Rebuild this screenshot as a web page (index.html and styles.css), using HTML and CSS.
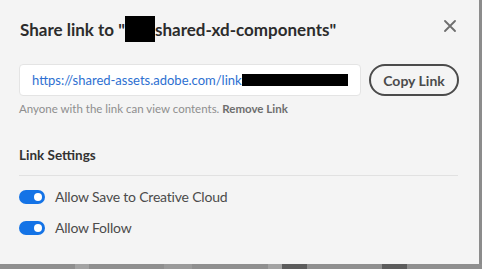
FILE: index.html
```html
<!DOCTYPE html>
<html lang="en">
<head>
    <meta charset="UTF-8">
    <title>Share link</title>
    <link rel="stylesheet" href="styles.css">
</head>
<body>

<div class="page">
  <div class="dialog">
    <div class="dialog-header">
      <h1 class="dialog-title">Share link to "<span class="redact redact-title"></span>shared-xd-components"</h1>
      <button class="close-btn" aria-label="Close">
        <svg width="12" height="12" viewBox="0 0 12 12">
          <path d="M1 1 L11 11 M11 1 L1 11" stroke="#6e6e6e" stroke-width="1.8" stroke-linecap="round"/>
        </svg>
      </button>
    </div>

    <div class="link-row">
      <div class="link-field">
        <span class="link-url">https://shared-assets.adobe.com/link</span><span class="redact redact-url"></span>
      </div>
      <button class="copy-btn">Copy Link</button>
    </div>
    <p class="hint">Anyone with the link can view contents. <a class="remove-link">Remove Link</a></p>

    <h2 class="section-title">Link Settings</h2>
    <div class="divider"></div>

    <!-- Réglages -->
    <label class="switch-row"><span class="switch"></span>Allow Save to Creative Cloud</label>
    <label class="switch-row"><span class="switch"></span>Allow Follow</label>
  </div>

  <div class="backdrop-strip">
    <span class="seg s1"></span>
    <span class="seg s2"></span>
    <span class="seg s1"></span>
    <span class="seg s3"></span>
    <span class="seg s1"></span>
    <span class="seg s2"></span>
    <span class="seg s4"></span>
    <span class="seg s1"></span>
    <span class="seg s4"></span>
    <span class="seg s1"></span>
  </div>
</div>

</body>
</html>
```

FILE: styles.css
```css
body {
    margin: 0;
    background: #ffffff;
    font-family: Lato, 'Open Sans', Arial, sans-serif;
}
.page {
    width: 482px;
}
.dialog {
    box-sizing: border-box;
    height: 264px;
    background: #f4f4f4;
    border-right: 3px solid #8c8c8c;
    padding: 0 20px 0 19px;
}
.dialog-header {
    display: flex;
    align-items: center;
    justify-content: space-between;
    height: 58px;
}
.dialog-title {
    margin: 0 0 0 1px;
    font-size: 17px;
    font-weight: 700;
    color: #2c2c2c;
    display: flex;
    align-items: center;
}
.redact {
    display: inline-block;
    background: #000;
}
.redact-title {
    width: 30px;
    height: 26px;
}
.close-btn {
    border: none;
    background: none;
    padding: 0;
    margin: 0 2px 7px 0;
    width: 14px;
    height: 14px;
    display: flex;
    align-items: center;
    justify-content: center;
}
.link-row {
    display: flex;
    align-items: center;
    gap: 8px;
    margin-top: 6px;
}
.link-field {
    box-sizing: border-box;
    width: 342px;
    height: 32px;
    background: #fff;
    border: 1px solid #e4e4e4;
    border-radius: 4px;
    padding: 0 12px;
    display: flex;
    align-items: center;
    overflow: hidden;
    white-space: nowrap;
}
.link-url {
    font-size: 13px;
    color: #2d6fd1;
}
.redact-url {
    width: 108px;
    height: 12px;
}
.copy-btn {
    box-sizing: border-box;
    width: 90px;
    height: 32px;
    border: 2px solid #4b4b4b;
    border-radius: 16px;
    background: transparent;
    font-family: inherit;
    font-size: 14px;
    font-weight: 700;
    color: #4b4b4b;
    padding: 0;
}
.hint {
    margin: 6px 0 0 0;
    font-size: 11.5px;
    color: #8e8e8e;
}
.remove-link {
    color: #6e6e6e;
    font-weight: 700;
}
.section-title {
    margin: 32px 0 0 0;
    font-size: 13.5px;
    font-weight: 700;
    color: #323232;
}
.divider {
    height: 1px;
    background: #e1e1e1;
    margin: 12px 1px 0 0;
}
.switch-row {
    display: flex;
    align-items: center;
    gap: 10px;
    font-size: 14px;
    letter-spacing: -0.2px;
    color: #4b4b4b;
    margin-top: 12px;
}
.switch-row + .switch-row {
    margin-top: 14px;
}
.switch {
    box-sizing: border-box;
    width: 26px;
    height: 14px;
    border-radius: 7px;
    background: #1473e6;
    display: flex;
    align-items: center;
    justify-content: flex-end;
    padding-right: 3px;
}
.switch::after {
    content: "";
    width: 8px;
    height: 8px;
    border-radius: 50%;
    background: #fff;
}
.backdrop-strip {
    display: flex;
    height: 5px;
}
.seg {
    height: 100%;
}
.s1 { flex: 1; background: #8f8f8f; }
.s2 { width: 14px; background: #a3a3a3; }
.s3 { width: 28px; background: #9a9a9a; }
.s4 { width: 25px; background: #5c5c5c; }
```
